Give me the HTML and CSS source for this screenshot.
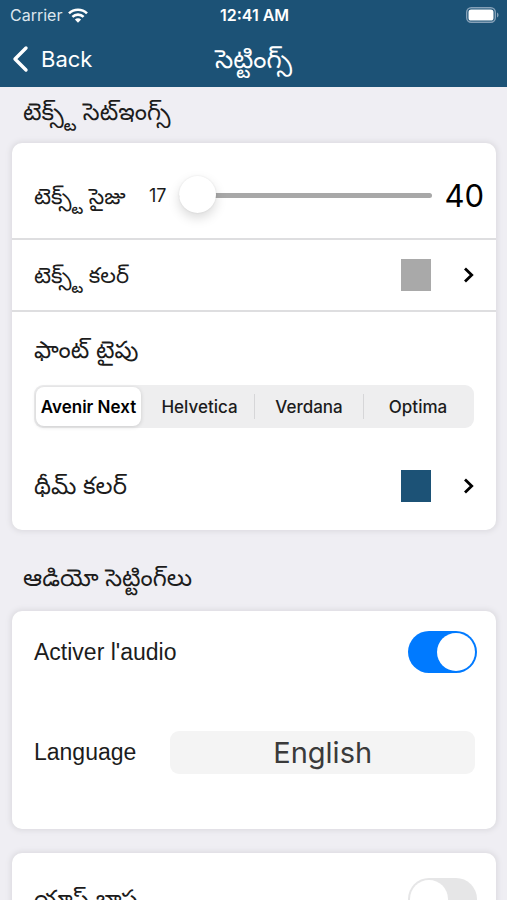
FILE: index.html
```html
<!DOCTYPE html>
<html lang="te">
<head>
<meta charset="utf-8">
<meta name="viewport" content="width=device-width, initial-scale=1">
<title>సెట్టింగ్స్</title>
<link rel="stylesheet" href="styles.css">
</head>
<body>
<header class="top">
  <div class="status">
    <span class="carrier">Carrier
      <svg width="20" height="15" viewBox="0 0 20 15" fill="none" stroke="#fff" stroke-width="2.6" aria-hidden="true"><path d="M1 5.4a12.8 12.8 0 0 1 18 0M4.4 8.9a8 8 0 0 1 11.2 0"/><path d="M10 14.8 6.9 11.6a4.4 4.4 0 0 1 6.2 0z" fill="#fff" stroke="none"/></svg>
    </span>
    <span class="clock">12:41 AM</span>
    <svg class="battery" width="33" height="16" viewBox="0 0 33 16" aria-hidden="true"><rect x=".7" y=".7" width="28.6" height="14.6" rx="4.5" fill="none" stroke="#86a1b8" stroke-width="1.4"/><rect x="2.5" y="2.5" width="25" height="11" rx="2.6" fill="#fff"/><path d="M31 5.5c2 .8 2 4.2 0 5z" fill="#86a1b8"/></svg>
  </div>
  <nav class="nav">
    <a class="back" href="#"><svg width="17" height="28" viewBox="0 0 17 28" fill="none" stroke="#fff" stroke-width="3.4" stroke-linecap="round" stroke-linejoin="round" aria-hidden="true"><path d="M14 3 3 14l11 11"/></svg>Back</a>
    <h1 class="title">సెట్టింగ్స్</h1>
  </nav>
</header>
<main class="content">
  <h2 class="heading">టెక్స్ట్ సెట్ఇంగ్స్</h2>
  <section class="card">
    <div class="row row-size">
      <label class="label" for="size">టెక్స్ట్ సైజు</label>
      <span class="min">17</span>
      <input class="slider" id="size" type="range" min="17" max="40" value="17">
      <span class="max">40</span>
    </div>
    <button class="row row-color" type="button">
      <span class="label">టెక్స్ట్ కలర్</span>
      <span class="swatch swatch-text"></span>
      <svg class="chevron" width="12" height="18" viewBox="0 0 12 18" aria-hidden="true"><path d="M2 2.5 8.7 9 2 15.5"/></svg>
    </button>
    <fieldset class="fonts">
      <legend class="label label-large">ఫాంట్ టైపు</legend>
      <div class="segments">
        <label class="segment"><input type="radio" name="font" checked><span>Avenir Next</span></label>
        <label class="segment"><input type="radio" name="font"><span>Helvetica</span></label>
        <label class="segment"><input type="radio" name="font"><span>Verdana</span></label>
        <label class="segment"><input type="radio" name="font"><span>Optima</span></label>
      </div>
    </fieldset>
    <button class="row row-theme" type="button">
      <span class="label label-large">థీమ్ కలర్</span>
      <span class="swatch swatch-theme"></span>
      <svg class="chevron" width="12" height="18" viewBox="0 0 12 18" aria-hidden="true"><path d="M2 2.5 8.7 9 2 15.5"/></svg>
    </button>
  </section>
  <h2 class="heading heading-audio">ఆడియో సెట్టింగ్‌లు</h2>
  <section class="card">
    <div class="row row-switch">
      <label class="label latin" for="audio">Activer l'audio</label>
      <input class="switch" id="audio" type="checkbox" role="switch" checked>
    </div>
    <div class="row row-language">
      <label class="label latin" for="language">Language</label>
      <select class="language" id="language"><option>English</option></select>
    </div>
  </section>
  <section class="card card-app">
    <div class="row row-switch row-app">
      <label class="label label-large" for="app">యాప్ భాష</label>
      <input class="switch" id="app" type="checkbox" role="switch">
    </div>
  </section>
</main>
</body>
</html>
```
FILE: styles.css
```css
* { box-sizing: border-box; }

body {
  margin: 0;
  height: 100vh;
  overflow: hidden;
  background: #efeef3;
  color: #1c1c1c;
  font-family: Inter, "Noto Sans Telugu", "Liberation Sans", sans-serif;
}

button, input, select, fieldset, legend {
  margin: 0;
  padding: 0;
  border: 0;
  font: inherit;
  color: inherit;
  background: none;
  appearance: none;
}

.top { background: #1c5276; color: #fff; }

.status, .nav {
  display: grid;
  grid-template-columns: 1fr auto 1fr;
  align-items: center;
}

.status {
  height: 30px;
  padding: 0 8px 0 10px;
  font-size: 16px;
}

.carrier { display: flex; align-items: center; gap: 6px; color: #dce6ee; }
.clock { font-weight: 600; }
.battery { justify-self: end; }

.nav { height: 57px; padding: 0 12px; }

.back {
  display: flex;
  align-items: center;
  gap: 12px;
  color: #fff;
  font-size: 22px;
  line-height: 28px;
  text-decoration: none;
}

.title { margin: 0; font-size: 26px; font-weight: 400; line-height: 32px; }

.content { padding: 0 11px 0 12px; }

.heading {
  margin: 0;
  padding: 0 11px;
  height: 56px;
  font-size: 24px;
  font-weight: 400;
  line-height: 50px;
}

.heading-audio { height: 81px; line-height: 96px; }

.card {
  background: #fff;
  border-radius: 10px;
  box-shadow: 0 0 5px 2px #dedde2;
}

.card-app { margin-top: 24px; }

.row {
  display: flex;
  align-items: center;
  width: 100%;
  padding: 0 21px 0 22px;
  text-align: left;
}

.label { font-size: 22px; line-height: 32px; white-space: nowrap; }
.label-large { font-size: 24px; }
.latin { font-family: "Liberation Sans", sans-serif; font-size: 23px; }

.row-size {
  height: 97px;
  padding-right: 12px;
  padding-top: 10px;
  border-bottom: 2px solid #dedee0;
}

.row-size .label { flex: none; width: 115px; }
.min { width: 30px; font-size: 18px; }
.max { margin-left: 12px; color: #000; font-size: 31px; }

.slider { flex: 1; min-width: 0; height: 38px; }

.slider::-webkit-slider-runnable-track {
  height: 5px;
  border-radius: 3px;
  background: #a8a8a8;
}

.slider::-webkit-slider-thumb {
  appearance: none;
  width: 37px;
  height: 37px;
  margin-top: -17px;
  border-radius: 50%;
  background: #fff;
  box-shadow: 0 5px 12px #00000026, 0 0 2px #00000018;
}

.row-color { height: 72px; border-bottom: 2px solid #dedee0; }

.swatch { width: 30px; height: 32px; margin-left: auto; }
.swatch-text { background: #a9a9a9; }
.swatch-theme { background: #1c5276; }

.chevron {
  margin-left: 32px;
  fill: none;
  stroke: #000;
  stroke-width: 2.8;
}

.fonts { padding: 22px 22px 0; }
.fonts .label { float: left; margin-bottom: 19px; }

.segments {
  clear: both;
  display: grid;
  grid-template-columns: repeat(4, 1fr);
  height: 43px;
  padding: 2px;
  border-radius: 9px;
  background: #eeeeef;
}

.segment {
  display: flex;
  border-left: 1px solid #d6d6d8;
  border-image: linear-gradient(transparent 20%, #d6d6d8 20% 80%, transparent 80%) 1;
  font-size: 17px;
  font-weight: 500;
}

.segment:nth-child(-n+2) { border: 0; }
.segment:first-child { margin-right: 4px; }

.segment input { position: absolute; opacity: 0; }

.segment span {
  flex: 1;
  display: grid;
  place-items: center;
  border-radius: 8px;
  white-space: nowrap;
}

.segment input:checked + span {
  background: #fff;
  color: #000;
  font-weight: 600;
  box-shadow: 0 1px 4px #00000026;
}

.row-theme { height: 102px; padding-top: 14px; }

.row-switch { height: 82px; padding-right: 19px; }
.row-app { height: 92px; }

.switch {
  display: flex;
  width: 69px;
  height: 42px;
  margin-left: auto;
  padding: 2px;
  border-radius: 21px;
  background: #e6e6e7;
}

.switch::before {
  content: "";
  width: 38px;
  height: 38px;
  border-radius: 50%;
  background: #fff;
}

.switch:checked { justify-content: flex-end; background: #007aff; }

.row-language { height: 136px; padding-bottom: 18px; }

.language {
  flex: 1;
  height: 43px;
  margin-left: 34px;
  border-radius: 9px;
  background: #f4f4f4;
  color: #3a3a3a;
  font-size: 29px;
  text-align: center;
  text-align-last: center;
}
```
